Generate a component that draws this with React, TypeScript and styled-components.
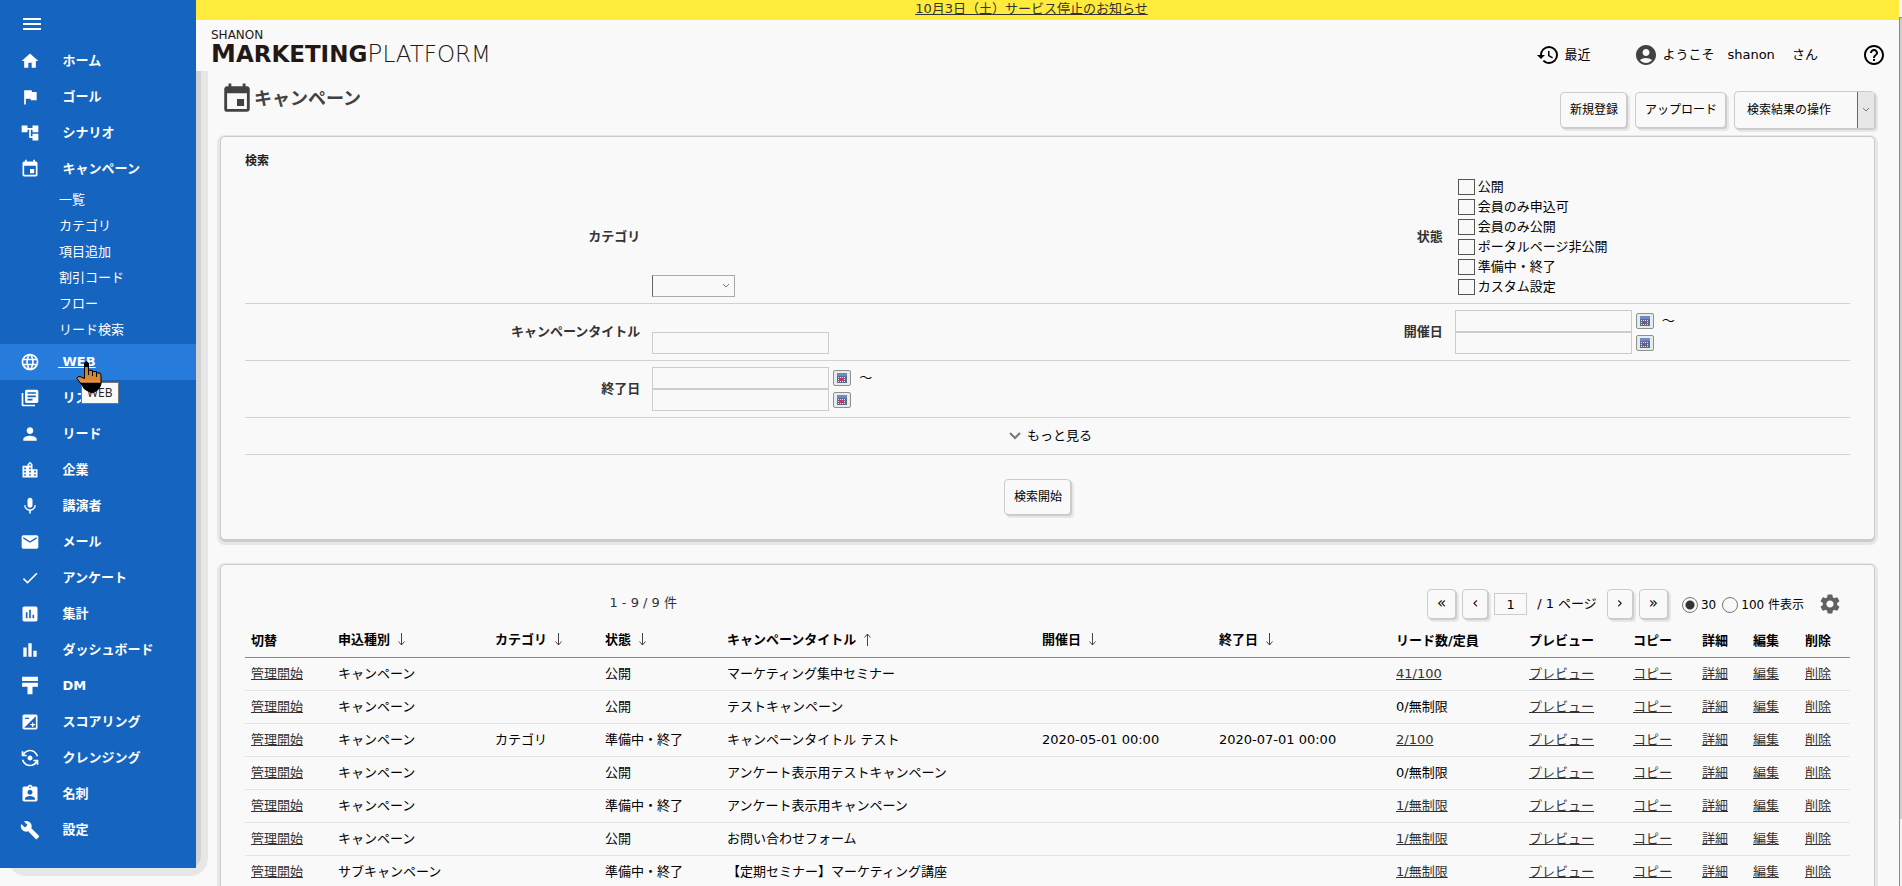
import React from "react";
import styled, { createGlobalStyle, css } from "styled-components";
import {
  MdAccountCircle,
  MdAccountTree,
  MdAssessment,
  MdAssignmentInd,
  MdBarChart,
  MdBuild,
  MdCheck,
  MdEmail,
  MdEvent,
  MdExposure,
  MdFlag,
  MdFlipCameraAndroid,
  MdHelpOutline,
  MdHistory,
  MdHome,
  MdLanguage,
  MdLibraryBooks,
  MdLocationCity,
  MdMenu,
  MdMic,
  MdPerson,
  MdSettings,
} from "react-icons/md";

const color = {
  page: "#f9f9f9",
  blue: "#1565c0",
  blueHover: "#277bdb",
  yellow: "#ffeb3b",
  line: "#cccccc",
  soft: "#e7e7e7",
  text: "#000000",
  dim: "#333333",
  icon: "#424242",
};

const GlobalStyle = createGlobalStyle`
  *, *::before, *::after { box-sizing: border-box; }
  body {
    margin: 0;
    background: ${color.page};
    color: ${color.text};
    font-family: "DejaVu Sans", "Noto Sans CJK JP", sans-serif;
    font-size: 13px;
    line-height: 20px;
  }
  button, input, select { font: inherit; color: inherit; }
  a { color: inherit; }
`;

/* ---------- page frame ---------- */

const Page = styled.div`
  display: grid;
  grid-template-columns: 196px minmax(0, 1fr) 3px;
  height: 100vh;
  overflow: hidden;
`;

const SidebarWrap = styled.div`
  position: relative;
  align-self: start;

  &::before,
  &::after {
    content: "";
    position: absolute;
    z-index: -1;
  }
  &::before {
    inset: 71px -12px -8px 8px;
    border-radius: 0 0 18px 18px;
    background: ${color.soft};
  }
  &::after {
    inset: 71px -5px 0 20px;
    border-radius: 0 0 12px 0;
    background: #d3d3d3;
  }
`;

const Sidebar = styled.nav`
  padding: 0 0 20px;
  background: ${color.blue};
  color: #ffffff;
`;

const MenuButton = styled.button`
  display: flex;
  align-items: center;
  height: 43px;
  padding: 4px 0 0 20px;
  border: 0;
  background: none;
  font-size: 24px;
`;

const MenuList = styled.ul`
  margin: 0;
  padding: 0;
  list-style: none;
`;

const MenuItem = styled.li<{ $active?: boolean }>`
  position: relative;
  background: ${(p) => (p.$active ? color.blueHover : "transparent")};
`;

const MenuLink = styled.a<{ $active?: boolean }>`
  display: flex;
  align-items: center;
  gap: 18px;
  height: 36px;
  padding-left: 20px;
  font-weight: bold;
  text-decoration: none;

  svg {
    width: 20px;
    height: 20px;
  }
  span {
    white-space: pre;
    text-decoration: ${(p) => (p.$active ? "underline" : "none")};
  }
`;

const SubList = styled.ul`
  margin: 0;
  padding: 0 0 1px 59px;
  list-style: none;
  line-height: 26px;

  a {
    text-decoration: none;
  }
`;

const Tooltip = styled.div`
  position: absolute;
  z-index: 1;
  left: 81px;
  top: 38px;
  height: 22px;
  padding: 0 5px;
  border: 1px solid #767676;
  background: ${color.page};
  color: #222222;
  font-family: "Open Sans", sans-serif;
  font-size: 12px;
`;

const Pointer = styled.svg`
  position: absolute;
  z-index: 2;
  left: 76px;
  top: 16px;
  width: 26px;
  height: 34px;
`;

const Main = styled.main`
  display: flex;
  flex-direction: column;
  min-width: 0;
`;

const Notice = styled.div`
  height: 20px;
  padding-right: 32px;
  background: ${color.yellow};
  color: ${color.dim};
  text-align: center;
  line-height: 18px;
`;

const ScrollRail = styled.div`
  padding: 17px 0 10px;
  background: #f4f4f4;
`;

const ScrollTrack = styled.div`
  height: 100%;
  border-left: 1px solid #8a8a8a;
  border-top: 1px solid #8a8a8a;
`;

const ScrollThumb = styled.div`
  height: 88%;
  background: #cdcdcd;
`;

/* ---------- header ---------- */

const Header = styled.header`
  display: flex;
  align-items: flex-end;
  gap: 44px;
  height: 51px;
  padding: 0 13px 4px 15px;
`;

const Logo = styled.a`
  margin: 0 auto 0 0;
  color: #231815;
  text-decoration: none;
  white-space: nowrap;
`;

const LogoTop = styled.div`
  font-size: 12px;
  line-height: 12px;
`;

const LogoMain = styled.div`
  font-size: 23px;
  line-height: 26px;
`;

const LogoBold = styled.span`
  font-weight: bold;
`;

const LogoThin = styled.span`
  font-weight: 200;
`;

const LogoInitial = styled.span`
  font-size: 25px;
`;

const HeaderItem = styled.a`
  display: flex;
  align-items: center;
  gap: 4px;
  text-decoration: none;
  white-space: pre;

  svg {
    width: 24px;
    height: 24px;
  }
`;

const TitleRow = styled.div`
  display: flex;
  justify-content: space-between;
  align-items: flex-start;
  height: 65px;
  padding: 11px 24px 0 24px;
`;

const Title = styled.h1`
  display: flex;
  align-items: center;
  margin: 0;
  color: ${color.icon};
  font-size: 18px;

  svg {
    width: 34px;
    height: 34px;
  }
`;

const Actions = styled.div`
  display: flex;
  align-items: center;
  gap: 8px;
  margin-top: 9px;
`;

const raised = css`
  border: 1px solid ${color.line};
  border-radius: 4px;
  background: ${color.page};
  box-shadow: 1px 1px 0 ${color.line}, 3px 3px 0 ${color.soft};
`;

const Button = styled.button`
  ${raised}
  height: 36px;
  padding: 0 8px 0 9px;
  font-size: 12px;
  white-space: nowrap;
`;

const PagerButton = styled.button`
  ${raised}
  height: 30px;
  padding: 0 9px 2px;
  font-size: 15px;
`;

const ActionSelectBox = styled.div`
  ${raised}
  position: relative;
  width: 141px;
  height: 38px;
`;

const ActionSelect = styled.select`
  appearance: none;
  width: 100%;
  height: 100%;
  padding: 0 20px 0 12px;
  border: 0;
  background: none;
  font-size: 12px;
`;

const ActionArrow = styled.span`
  position: absolute;
  top: 0;
  right: 0;
  bottom: 0;
  display: grid;
  place-items: center;
  width: 17px;
  border-left: 1px solid #666666;
  background: ${color.soft};
  pointer-events: none;
`;

/* ---------- panels ---------- */

const Panel = styled.section`
  flex: none;
  margin: 0 24px 24px;
  padding: 14px 24px 24px;
  border: 1px solid ${color.line};
  border-radius: 5px;
  background: ${color.page};
  box-shadow: 0 2px 0 ${color.line}, 0 2px 0 3px ${color.soft};
`;

const ResultPanel = styled(Panel)`
  padding-top: 24px;
`;

const PanelTitle = styled.h2`
  margin: 0;
  color: #222222;
  font-size: 12px;
`;

const FormRow = styled.div`
  display: grid;
  grid-template-columns: repeat(4, minmax(0, 1fr));
  padding: 6px 0;
  border-bottom: 1px solid #d2d2d2;
`;

const FieldLabel = styled.label`
  align-self: center;
  padding: 0 6px;
  color: ${color.dim};
  font-weight: bold;
  text-align: right;
`;

const Field = styled.div`
  display: flex;
  flex-direction: column;
  justify-content: flex-end;
  align-items: flex-start;
  padding: 0 6px;
`;

const FieldLine = styled.div`
  display: flex;
  align-items: center;
  height: 22px;
  gap: 4px;
`;

const TextInput = styled.input`
  width: 177px;
  height: 22px;
  padding: 0 4px;
  border: 1px solid ${color.line};
  background: ${color.page};
`;

const CalendarButton = styled.button`
  display: grid;
  place-items: center;
  width: 18px;
  height: 16px;
  padding: 0;
  border: 1px solid #8f8f8f;
  border-radius: 2px;
  background: #e6ece8;
`;

const Tilde = styled.span`
  padding-left: 4px;
`;

const CategorySelectBox = styled.div`
  position: relative;
  height: 22px;

  svg {
    position: absolute;
    top: 8px;
    right: 5px;
    pointer-events: none;
  }
`;

const CategorySelect = styled.select`
  appearance: none;
  width: 83px;
  height: 22px;
  border: 1px solid #aaaaaa;
  border-left-color: #666666;
  border-radius: 0;
  background: ${color.page};
`;

const CheckLabel = styled.label`
  display: flex;
  align-items: center;
  gap: 3px;
  height: 20px;
  padding-left: 3px;
`;

const CheckBox = styled.input`
  appearance: none;
  width: 17px;
  height: 16px;
  margin: 0;
  border: 1px solid #555555;
  background: ${color.page};

  &:checked {
    background: #555555;
  }
`;

const MoreButton = styled.button`
  display: flex;
  align-items: center;
  justify-content: center;
  gap: 6px;
  width: 100%;
  height: 37px;
  padding: 0 0 0 6px;
  border: 0;
  border-bottom: 1px solid #d2d2d2;
  background: none;
`;

const SubmitRow = styled.div`
  display: flex;
  justify-content: center;
  padding: 24px 20px 0 0;
`;

/* ---------- result list ---------- */

const Toolbar = styled.div`
  display: grid;
  grid-template-columns: 1fr 1fr;
  align-items: center;
  height: 30px;
  margin-bottom: 6px;
`;

const Count = styled.div`
  padding: 0 6px 2px 0;
  color: ${color.dim};
  text-align: center;
`;

const Pager = styled.div`
  display: flex;
  align-items: center;
  justify-content: flex-end;
  gap: 6px;
  padding-right: 8px;
  white-space: nowrap;
`;

const PageInput = styled(TextInput)`
  width: 33px;
  text-align: center;
`;

const PageTotal = styled.span`
  padding: 0 4px;
`;

const PerPage = styled.div`
  display: flex;
  align-items: center;
  gap: 6px;
  padding: 2px 8px 0;
  font-size: 12px;
`;

const RadioLabel = styled.label`
  display: flex;
  align-items: center;
  gap: 3px;
`;

const Radio = styled.input`
  appearance: none;
  width: 16px;
  height: 16px;
  margin: 0;
  border: 1px solid #777777;
  border-radius: 50%;
  background: ${color.page};

  &:checked {
    background: radial-gradient(circle, #333333 4px, transparent 5px);
  }
`;

const GearButton = styled.button`
  display: flex;
  padding: 0;
  border: 0;
  background: none;
  color: #616161;
  font-size: 24px;
`;

const Table = styled.table`
  width: 100%;
  table-layout: fixed;
  border-collapse: separate;
  border-spacing: 0;
  white-space: nowrap;
`;

const Th = styled.th<{ $width?: number }>`
  width: ${(p) => (p.$width ? `${p.$width}px` : "auto")};
  height: 33px;
  padding: 0 6px;
  border-bottom: 1px solid #888888;
  text-align: left;
`;

const Td = styled.td`
  height: 33px;
  padding: 0 6px;
  border-bottom: 1px solid #e4e4e4;

  a {
    color: ${color.dim};
  }
`;

const SortButton = styled.button`
  padding: 0 0 0 7px;
  border: 0;
  background: none;
  vertical-align: -2px;
`;

/* ---------- drawings ---------- */

const PostIcon = () => (
  <svg viewBox="0 0 24 24" fill="currentColor" aria-hidden="true">
    <path d="M2.500 1h19v5h-19zM2.500 8h19v5h-6.500v9h-6v-9h-6.500z" />
  </svg>
);

const Chevron = ({ size = 8, width = 1 }: { size?: number; width?: number }) => (
  <svg width={size} height={size / 2 + 2} viewBox={`0 0 ${size} ${size / 2 + 2}`} aria-hidden="true">
    <path
      d={`M1 1L${size / 2} ${size / 2}L${size - 1} 1`}
      fill="none"
      stroke="#777777"
      strokeWidth={width}
    />
  </svg>
);

const SortArrow = ({ up }: { up?: boolean }) => (
  <svg width="9" height="13" viewBox="0 0 9 13" fill="none" stroke="#444444" aria-hidden="true">
    <path d={up ? "M4.500 13V1M1.500 4.500L4.500 1L7.500 4.500" : "M4.500 0V12M1.500 8.500L4.500 12L7.500 8.500"} />
  </svg>
);

const CalendarGlyph = () => (
  <svg width="10" height="10" viewBox="0 0 10 10" aria-hidden="true">
    <rect width="10" height="10" fill="#5b6c93" />
    <rect width="10" height="3" fill="#7089c4" />
    <path d="M1 4.500h8M1 6.500h8M1 8.500h8" stroke="#d9deea" strokeDasharray="1 1" />
    <rect x="3" y="5" width="3" height="3" fill="#d8304c" />
  </svg>
);

const HandPointer = () => (
  <Pointer viewBox="0 0 26 34" aria-hidden="true">
    <defs>
      <linearGradient id="hand" x1="0" y1="0" x2="0" y2="1">
        <stop offset="0" stopColor="#c8741f" />
        <stop offset="0.6" stopColor="#dc8a35" />
        <stop offset="0.66" stopColor="#f0a24e" />
        <stop offset="0.68" stopColor="#000000" />
        <stop offset="1" stopColor="#000000" />
      </linearGradient>
    </defs>
    <path
      d="M8.500 3Q10.500 0 12.500 3V10L16.500 10.500L17.500 11.500L20.500 11.500L21.500 13L24 13Q25 14 25 16V24Q24 29 20 31L16 33L12 31Q8 30 6 25L1 18.500Q1 16 4 16.500L8.500 18.500Z"
      fill="url(#hand)"
      stroke="#000000"
    />
    <path d="M12.500 10V15M16.500 11V16M20.500 12V17" stroke="#000000" />
    <rect x="9" y="2" width="3" height="5" fill="#000000" />
  </Pointer>
);

/* ---------- data ---------- */

type Item = { label: string; icon: React.ReactNode; children?: string[]; active?: boolean };

const menu: Item[] = [
  { label: "ホーム", icon: <MdHome /> },
  { label: "ゴール", icon: <MdFlag /> },
  { label: "シナリオ", icon: <MdAccountTree /> },
  {
    label: "キャンペーン",
    icon: <MdEvent />,
    children: ["一覧", "カテゴリ", "項目追加", "割引コード", "フロー", "リード検索"],
  },
  { label: "WEB", icon: <MdLanguage />, active: true },
  { label: "リスト", icon: <MdLibraryBooks /> },
  { label: "リード", icon: <MdPerson /> },
  { label: "企業", icon: <MdLocationCity /> },
  { label: "講演者", icon: <MdMic /> },
  { label: "メール", icon: <MdEmail /> },
  { label: "アンケート", icon: <MdCheck /> },
  { label: "集計", icon: <MdAssessment /> },
  { label: "ダッシュボード", icon: <MdBarChart /> },
  { label: "DM", icon: <PostIcon /> },
  { label: "スコアリング", icon: <MdExposure /> },
  { label: "クレンジング", icon: <MdFlipCameraAndroid /> },
  { label: "名刺", icon: <MdAssignmentInd /> },
  { label: "設定", icon: <MdBuild /> },
];

const statuses = [
  "公開",
  "会員のみ申込可",
  "会員のみ公開",
  "ポータルページ非公開",
  "準備中・終了",
  "カスタム設定",
];

type Column = { label: string; width?: number; sort?: "up" | "down" };

const columns: Column[] = [
  { label: "切替", width: 87 },
  { label: "申込種別", width: 157, sort: "down" },
  { label: "カテゴリ", width: 110, sort: "down" },
  { label: "状態", width: 122, sort: "down" },
  { label: "キャンペーンタイトル", sort: "up" },
  { label: "開催日", width: 177, sort: "down" },
  { label: "終了日", width: 177, sort: "down" },
  { label: "リード数/定員", width: 133 },
  { label: "プレビュー", width: 104 },
  { label: "コピー", width: 69 },
  { label: "詳細", width: 51 },
  { label: "編集", width: 52 },
  { label: "削除", width: 51 },
];

type Row = {
  type: string;
  category?: string;
  status: string;
  title: string;
  from?: string;
  to?: string;
  leads: string;
};

const rows: Row[] = [
  { type: "キャンペーン", status: "公開", title: "マーケティング集中セミナー", leads: "41/100" },
  { type: "キャンペーン", status: "公開", title: "テストキャンペーン", leads: "0/無制限" },
  {
    type: "キャンペーン",
    category: "カテゴリ",
    status: "準備中・終了",
    title: "キャンペーンタイトル テスト",
    from: "2020-05-01 00:00",
    to: "2020-07-01 00:00",
    leads: "2/100",
  },
  { type: "キャンペーン", status: "公開", title: "アンケート表示用テストキャンペーン", leads: "0/無制限" },
  { type: "キャンペーン", status: "準備中・終了", title: "アンケート表示用キャンペーン", leads: "1/無制限" },
  { type: "キャンペーン", status: "公開", title: "お問い合わせフォーム", leads: "1/無制限" },
  {
    type: "サブキャンペーン",
    status: "準備中・終了",
    title: "【定期セミナー】マーケティング講座",
    leads: "1/無制限",
  },
];

const DateRange = ({ id, label }: { id: string; label: string }) => (
  <Field>
    <FieldLine>
      <TextInput id={id} type="text" />
      <CalendarButton type="button" aria-label={`${label} 開始`}>
        <CalendarGlyph />
      </CalendarButton>
      <Tilde>～</Tilde>
    </FieldLine>
    <FieldLine>
      <TextInput type="text" aria-label={`${label} 終了`} />
      <CalendarButton type="button" aria-label={`${label} 終了`}>
        <CalendarGlyph />
      </CalendarButton>
    </FieldLine>
  </Field>
);

const SideMenu = () => (
  <SidebarWrap>
    <Sidebar>
      <MenuButton type="button" aria-label="メニュー">
        <MdMenu />
      </MenuButton>
      <MenuList>
        {menu.map((item) => (
          <MenuItem key={item.label} $active={item.active}>
            <MenuLink href="#" $active={item.active}>
              {item.icon}
              <span>{` ${item.label}`}</span>
            </MenuLink>
            {item.children && (
              <SubList>
                {item.children.map((child) => (
                  <li key={child}>
                    <a href="#">{child}</a>
                  </li>
                ))}
              </SubList>
            )}
            {item.active && (
              <>
                <Tooltip role="tooltip">{item.label}</Tooltip>
                <HandPointer />
              </>
            )}
          </MenuItem>
        ))}
      </MenuList>
    </Sidebar>
  </SidebarWrap>
);

const SearchPanel = () => (
  <Panel>
    <PanelTitle>検索</PanelTitle>
    <FormRow>
      <FieldLabel htmlFor="category">カテゴリ</FieldLabel>
      <Field>
        <CategorySelectBox>
          <CategorySelect id="category">
            <option value="" />
          </CategorySelect>
          <Chevron />
        </CategorySelectBox>
      </Field>
      <FieldLabel as="div">状態</FieldLabel>
      <Field>
        {statuses.map((s) => (
          <CheckLabel key={s}>
            <CheckBox type="checkbox" />
            {s}
          </CheckLabel>
        ))}
      </Field>
    </FormRow>
    <FormRow>
      <FieldLabel htmlFor="title">キャンペーンタイトル</FieldLabel>
      <Field>
        <TextInput id="title" type="text" />
      </Field>
      <FieldLabel htmlFor="held">開催日</FieldLabel>
      <DateRange id="held" label="開催日" />
    </FormRow>
    <FormRow>
      <FieldLabel htmlFor="ended">終了日</FieldLabel>
      <DateRange id="ended" label="終了日" />
    </FormRow>
    <MoreButton type="button">
      <Chevron size={12} width={2} />
      もっと見る
    </MoreButton>
    <SubmitRow>
      <Button type="button">検索開始</Button>
    </SubmitRow>
  </Panel>
);

const Results = () => (
  <ResultPanel>
    <Toolbar>
      <Count>1 - 9 / 9 件</Count>
      <Pager>
        <PagerButton type="button">«</PagerButton>
        <PagerButton type="button">‹</PagerButton>
        <PageInput type="text" defaultValue="1" aria-label="ページ" />
        <PageTotal>/ 1 ページ</PageTotal>
        <PagerButton type="button">›</PagerButton>
        <PagerButton type="button">»</PagerButton>
        <PerPage>
          <RadioLabel>
            <Radio type="radio" name="per" defaultChecked />
            30
          </RadioLabel>
          <RadioLabel>
            <Radio type="radio" name="per" />
            100 件表示
          </RadioLabel>
        </PerPage>
        <GearButton type="button" aria-label="表示設定">
          <MdSettings />
        </GearButton>
      </Pager>
    </Toolbar>
    <Table>
      <thead>
        <tr>
          {columns.map((c) => (
            <Th key={c.label} $width={c.width} scope="col">
              {c.label}
              {c.sort && (
                <SortButton type="button" aria-label={`${c.label} 並べ替え`}>
                  <SortArrow up={c.sort === "up"} />
                </SortButton>
              )}
            </Th>
          ))}
        </tr>
      </thead>
      <tbody>
        {rows.map((r) => (
          <tr key={r.title}>
            <Td><a href="#">管理開始</a></Td>
            <Td>{r.type}</Td>
            <Td>{r.category}</Td>
            <Td>{r.status}</Td>
            <Td>{r.title}</Td>
            <Td>{r.from}</Td>
            <Td>{r.to}</Td>
            <Td>{r.leads.startsWith("0/") ? r.leads : <a href="#">{r.leads}</a>}</Td>
            <Td><a href="#">プレビュー</a></Td>
            <Td><a href="#">コピー</a></Td>
            <Td><a href="#">詳細</a></Td>
            <Td><a href="#">編集</a></Td>
            <Td><a href="#">削除</a></Td>
          </tr>
        ))}
      </tbody>
    </Table>
  </ResultPanel>
);

export default function App() {
  return (
    <>
      <GlobalStyle />
      <Page>
        <SideMenu />
        <Main>
          <Notice>
            <a href="#">10月3日（土）サービス停止のお知らせ</a>
          </Notice>
          <Header>
            <Logo href="#">
              <LogoTop>SHANON</LogoTop>
              <LogoMain>
                <LogoBold><LogoInitial>M</LogoInitial>ARKETING</LogoBold>
                <LogoThin><LogoInitial>P</LogoInitial>LATFORM</LogoThin>
              </LogoMain>
            </Logo>
            <HeaderItem href="#">
              <MdHistory />
              最近
            </HeaderItem>
            <HeaderItem href="#">
              <MdAccountCircle color={color.icon} />
              {"ようこそ　shanon　 さん"}
            </HeaderItem>
            <HeaderItem href="#" aria-label="ヘルプ">
              <MdHelpOutline />
            </HeaderItem>
          </Header>
          <TitleRow>
            <Title>
              <MdEvent />
              キャンペーン
            </Title>
            <Actions>
              <Button type="button">新規登録</Button>
              <Button type="button">アップロード</Button>
              <ActionSelectBox>
                <ActionSelect aria-label="検索結果の操作">
                  <option>検索結果の操作</option>
                </ActionSelect>
                <ActionArrow>
                  <Chevron />
                </ActionArrow>
              </ActionSelectBox>
            </Actions>
          </TitleRow>
          <SearchPanel />
          <Results />
        </Main>
        <ScrollRail aria-hidden="true">
          <ScrollTrack>
            <ScrollThumb />
          </ScrollTrack>
        </ScrollRail>
      </Page>
    </>
  );
}
